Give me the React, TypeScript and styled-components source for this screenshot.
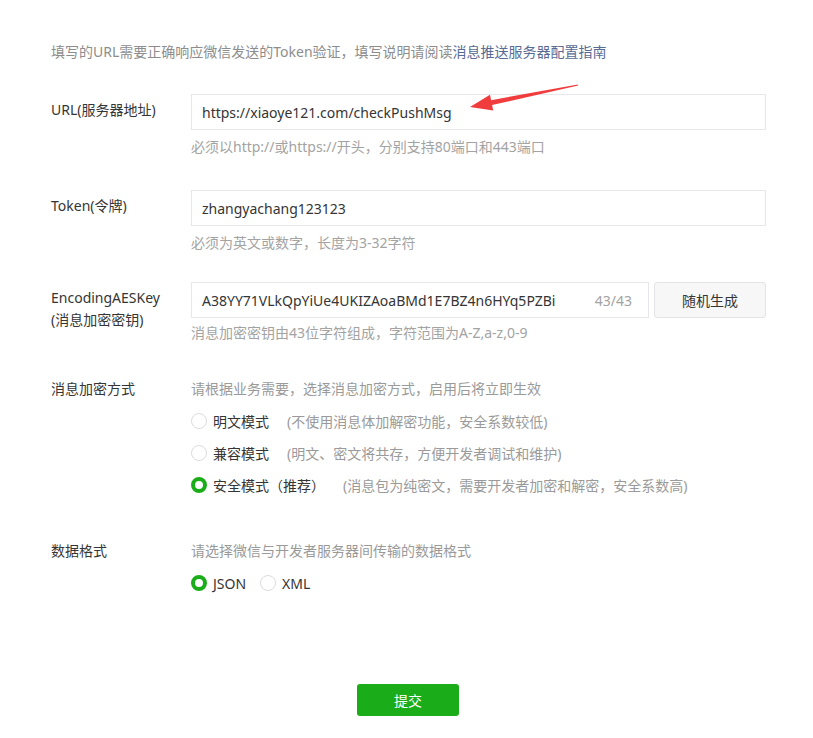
import styled, { createGlobalStyle } from 'styled-components';

// 加密方式选项
const ENCRYPT_MODES = [
  { key: 'plain', label: '明文模式', desc: '(不使用消息体加解密功能，安全系数较低)', checked: false },
  { key: 'compat', label: '兼容模式', desc: '(明文、密文将共存，方便开发者调试和维护)', checked: false },
  { key: 'safe', label: '安全模式（推荐）', desc: '(消息包为纯密文，需要开发者加密和解密，安全系数高)', checked: true },
];

const GlobalStyle = createGlobalStyle`
  html, body {
    margin: 0;
    padding: 0;
    background: #fff;
  }
  body {
    font-family: "Noto Sans", "Noto Sans CJK SC", sans-serif;
    font-size: 14px;
    color: #353535;
  }
`;

export default function App() {
  return (
    <>
      <GlobalStyle />
      <Page>
        <Intro>
          填写的URL需要正确响应微信发送的Token验证，填写说明请阅读<Link>消息推送服务器配置指南</Link>
        </Intro>

        {/* URL */}
        <Row $gap={31}>
          <Label>URL(服务器地址)</Label>
          <Field>
            <InputBox>https://xiaoye121.com/checkPushMsg</InputBox>
            <Tip>必须以http://或https://开头，分别支持80端口和443端口</Tip>
          </Field>
        </Row>

        {/* Token */}
        <Row $gap={32}>
          <Label>Token(令牌)</Label>
          <Field>
            <InputBox>zhangyachang123123</InputBox>
            <Tip>必须为英文或数字，长度为3-32字符</Tip>
          </Field>
        </Row>

        {/* EncodingAESKey */}
        <Row $gap={28}>
          <Label>
            EncodingAESKey
            <br />
            (消息加密密钥)
          </Label>
          <Field>
            <KeyLine>
              <KeyInput>
                <span>A38YY71VLkQpYiUe4UKIZAoaBMd1E7BZ4n6HYq5PZBi</span>
                <Counter>43/43</Counter>
              </KeyInput>
              <GhostButton>随机生成</GhostButton>
            </KeyLine>
            <Tip $tight>消息加密密钥由43位字符组成，字符范围为A-Z,a-z,0-9</Tip>
          </Field>
        </Row>

        {/* 消息加密方式 */}
        <Row $gap={34}>
          <Label $plain>消息加密方式</Label>
          <Field>
            <Desc>请根据业务需要，选择消息加密方式，启用后将立即生效</Desc>
            <RadioList>
              {ENCRYPT_MODES.map((mode) => (
                <RadioRow key={mode.key}>
                  <RadioItem>
                    <Radio $checked={mode.checked} />
                    <span>{mode.label}</span>
                  </RadioItem>
                  <RadioDesc>{mode.desc}</RadioDesc>
                </RadioRow>
              ))}
            </RadioList>
          </Field>
        </Row>

        {/* 数据格式 */}
        <Row $gap={39}>
          <Label $plain>数据格式</Label>
          <Field>
            <Desc>请选择微信与开发者服务器间传输的数据格式</Desc>
            <RadioList>
              <RadioRow>
                <RadioItem>
                  <Radio $checked />
                  <span>JSON</span>
                </RadioItem>
                <RadioItem>
                  <Radio />
                  <span>XML</span>
                </RadioItem>
              </RadioRow>
            </RadioList>
          </Field>
        </Row>

        <Footer>
          <SubmitButton>提交</SubmitButton>
        </Footer>

        {/* 红色标注箭头 */}
        <Arrow viewBox="0 0 813 738" width={813} height={738}>
          <polygon
            points="577.9,84.5 491.1,100.15 490,94.8 470,107 493.2,110.4 492.1,105.05 578.1,85.5"
            fill="#f03c3c"
          />
        </Arrow>
      </Page>
    </>
  );
}

const Page = styled.div`
  position: relative;
  width: 813px;
  height: 738px;
  box-sizing: border-box;
  padding: 41px 0 0 51px;
`;

const Intro = styled.div`
  line-height: 22px;
  color: #8d8d8d;
`;

const Link = styled.span`
  color: #576b95;
`;

const Row = styled.div<{ $gap: number }>`
  display: flex;
  align-items: flex-start;
  margin-top: ${(p) => p.$gap}px;
`;

const Label = styled.div<{ $plain?: boolean }>`
  width: 140px;
  flex-shrink: 0;
  line-height: 22px;
  padding-top: ${(p) => (p.$plain ? '0' : '5px')};
  color: #353535;
`;

const Field = styled.div`
  width: 575px;
  display: flex;
  flex-direction: column;
`;

const InputBox = styled.div`
  height: 36px;
  box-sizing: border-box;
  border: 1px solid #e7e7eb;
  padding: 0 10px;
  display: flex;
  align-items: center;
  color: #353535;
  font-size: 14px;
`;

const KeyLine = styled.div`
  display: flex;
  gap: 5px;
`;

const KeyInput = styled(InputBox)`
  flex: 1;
  justify-content: space-between;
  padding-right: 16px;
`;

const Counter = styled.span`
  color: #a3a3a3;
`;

const GhostButton = styled.div`
  width: 112px;
  height: 36px;
  box-sizing: border-box;
  border: 1px solid #e4e4e8;
  border-radius: 3px;
  background: #f7f7f7;
  display: flex;
  align-items: center;
  justify-content: center;
  color: #353535;
`;

const Tip = styled.div<{ $tight?: boolean }>`
  margin-top: ${(p) => (p.$tight ? '4px' : '6px')};
  line-height: 22px;
  color: #a3a3a3;
`;

const Desc = styled.div`
  line-height: 22px;
  color: #9a9a9a;
`;

const RadioList = styled.div`
  margin-top: 5px;
  display: flex;
  flex-direction: column;
`;

const RadioRow = styled.div`
  height: 32px;
  display: flex;
  align-items: center;
  gap: 14px;
`;

const RadioItem = styled.label`
  display: flex;
  align-items: center;
  gap: 6px;
  color: #353535;
`;

const Radio = styled.span<{ $checked?: boolean }>`
  width: 16px;
  height: 16px;
  box-sizing: border-box;
  border-radius: 50%;
  background: #fff;
  border: ${(p) => (p.$checked ? '4px solid #1aad19' : '1px solid #dcdcdc')};
`;

const RadioDesc = styled.span`
  margin-left: 4px;
  color: #9a9a9a;
`;

const Footer = styled.div`
  margin-top: 85px;
  padding-left: 306px;
`;

const SubmitButton = styled.div`
  width: 102px;
  height: 32px;
  border-radius: 3px;
  background: #1aad19;
  color: #fff;
  display: flex;
  align-items: center;
  justify-content: center;
`;

const Arrow = styled.svg`
  position: absolute;
  top: 0;
  left: 0;
  pointer-events: none;
`;
